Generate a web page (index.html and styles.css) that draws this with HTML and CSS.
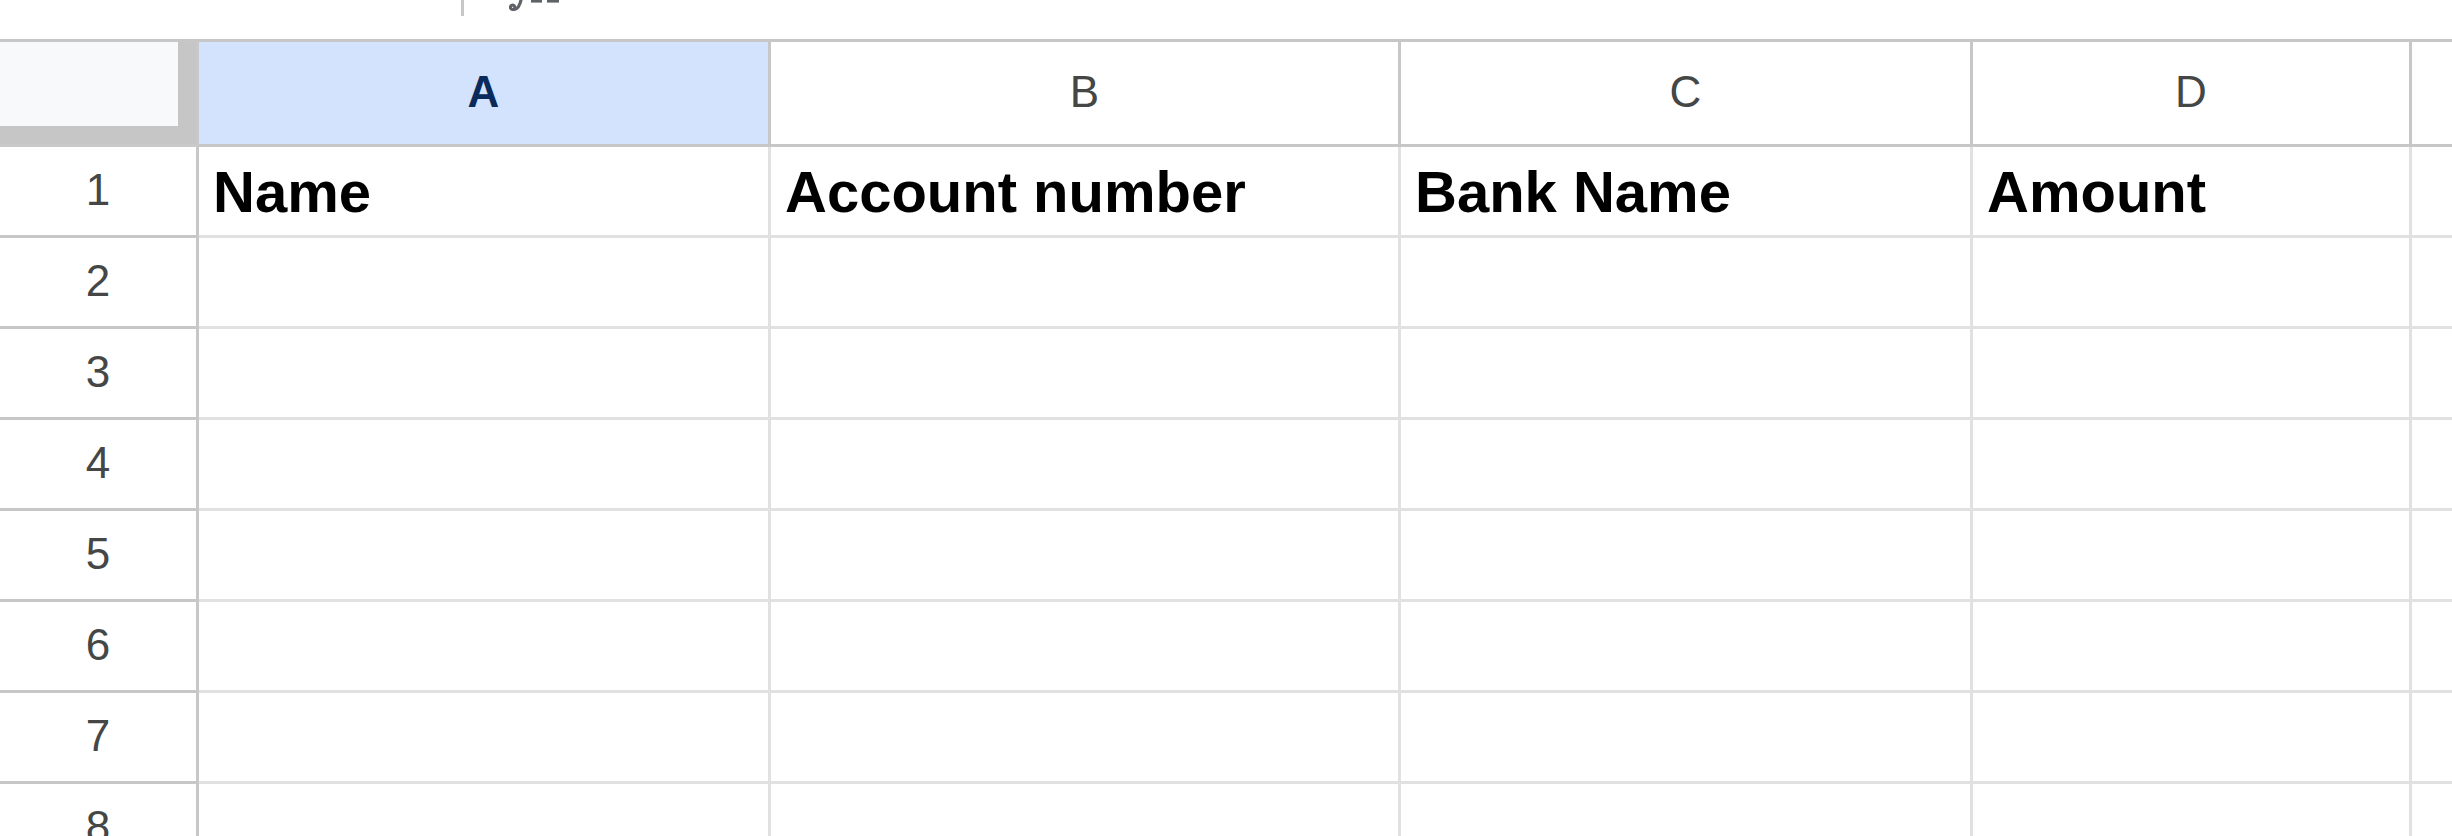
FILE: index.html
```html
<!DOCTYPE html>
<html lang="en">
<head>
<meta charset="utf-8">
<title>Sheet</title>
<link rel="stylesheet" href="styles.css">
</head>
<body>
<div class="toolbar">
  <div class="divider"></div>
  <svg class="fx" width="52" height="11" viewBox="0 0 52 11">
    <path d="M12 0 C11 5 9 9 5 9.5 C2.5 9.8 1 8.5 1.5 6.5 C2 4.5 5 4.5 5.5 6.5" fill="none" stroke="#5f6368" stroke-width="3.2" stroke-linecap="round"/>
    <rect x="22" y="0" width="11" height="2.6" fill="#5f6368"/>
    <rect x="38" y="0" width="12" height="2.6" fill="#5f6368"/>
  </svg>
</div>
<div class="grid">
  <div class="cell corner"><div class="corner-box"></div></div>
  <div class="cell ch selected">A</div>
  <div class="cell ch">B</div>
  <div class="cell ch">C</div>
  <div class="cell ch">D</div>
  <div class="cell ch last"></div>

  <div class="cell rh">1</div>
  <div class="cell data bold">Name</div>
  <div class="cell data bold">Account number</div>
  <div class="cell data bold">Bank Name</div>
  <div class="cell data bold">Amount</div>
  <div class="cell data last"></div>

  <div class="cell rh">2</div>
  <div class="cell data"></div><div class="cell data"></div><div class="cell data"></div><div class="cell data"></div><div class="cell data last"></div>

  <div class="cell rh">3</div>
  <div class="cell data"></div><div class="cell data"></div><div class="cell data"></div><div class="cell data"></div><div class="cell data last"></div>

  <div class="cell rh">4</div>
  <div class="cell data"></div><div class="cell data"></div><div class="cell data"></div><div class="cell data"></div><div class="cell data last"></div>

  <div class="cell rh">5</div>
  <div class="cell data"></div><div class="cell data"></div><div class="cell data"></div><div class="cell data"></div><div class="cell data last"></div>

  <div class="cell rh">6</div>
  <div class="cell data"></div><div class="cell data"></div><div class="cell data"></div><div class="cell data"></div><div class="cell data last"></div>

  <div class="cell rh">7</div>
  <div class="cell data"></div><div class="cell data"></div><div class="cell data"></div><div class="cell data"></div><div class="cell data last"></div>

  <div class="cell rh">8</div>
  <div class="cell data"></div><div class="cell data"></div><div class="cell data"></div><div class="cell data"></div><div class="cell data last"></div>
</div>
</body>
</html>
```
FILE: styles.css
```css
html, body {
  margin: 0;
  padding: 0;
  background: #ffffff;
}
body {
  width: 2452px;
  height: 836px;
  overflow: hidden;
  font-family: "Liberation Sans", Arial, sans-serif;
}
.toolbar {
  height: 39px;
  display: flex;
  align-items: flex-start;
}
.divider {
  margin-left: 461px;
  width: 3px;
  height: 16px;
  background: #c7c7c7;
}
.fx {
  margin-left: 45px;
  display: block;
}
.grid {
  display: grid;
  grid-template-columns: 199px 572px 630px 572px 439px 40px;
  grid-template-rows: 105px repeat(8, 91px);
  border-top: 3px solid #c7c7c7;
}
.cell {
  box-sizing: border-box;
  border-right: 3px solid #e1e1e1;
  border-bottom: 3px solid #e1e1e1;
  overflow: hidden;
  white-space: nowrap;
}
.cell.last {
  border-right: none;
}
.corner {
  background: #c6c6c6;
  border-right-color: #c9c9c9;
  border-bottom-color: #c9c9c9;
}
.corner-box {
  width: 178px;
  height: 84px;
  background: #f8f9fa;
}
.ch {
  border-right-color: #c7c7c7;
  border-bottom-color: #c7c7c7;
  display: flex;
  align-items: center;
  justify-content: center;
  font-size: 44px;
  line-height: 1;
  color: #444746;
  padding-bottom: 2px;
}
.ch.selected {
  background: #d3e3fd;
  color: #0b2a5c;
  font-weight: bold;
}
.rh {
  border-right-color: #c7c7c7;
  border-bottom-color: #c7c7c7;
  display: flex;
  align-items: center;
  justify-content: center;
  font-size: 44px;
  line-height: 1;
  color: #444746;
  padding-bottom: 3px;
}
.data {
  display: flex;
  align-items: flex-end;
  padding: 0 0 14px 14px;
  font-size: 58px;
  line-height: 1;
  color: #000000;
}
.data.bold {
  font-weight: bold;
}
```
